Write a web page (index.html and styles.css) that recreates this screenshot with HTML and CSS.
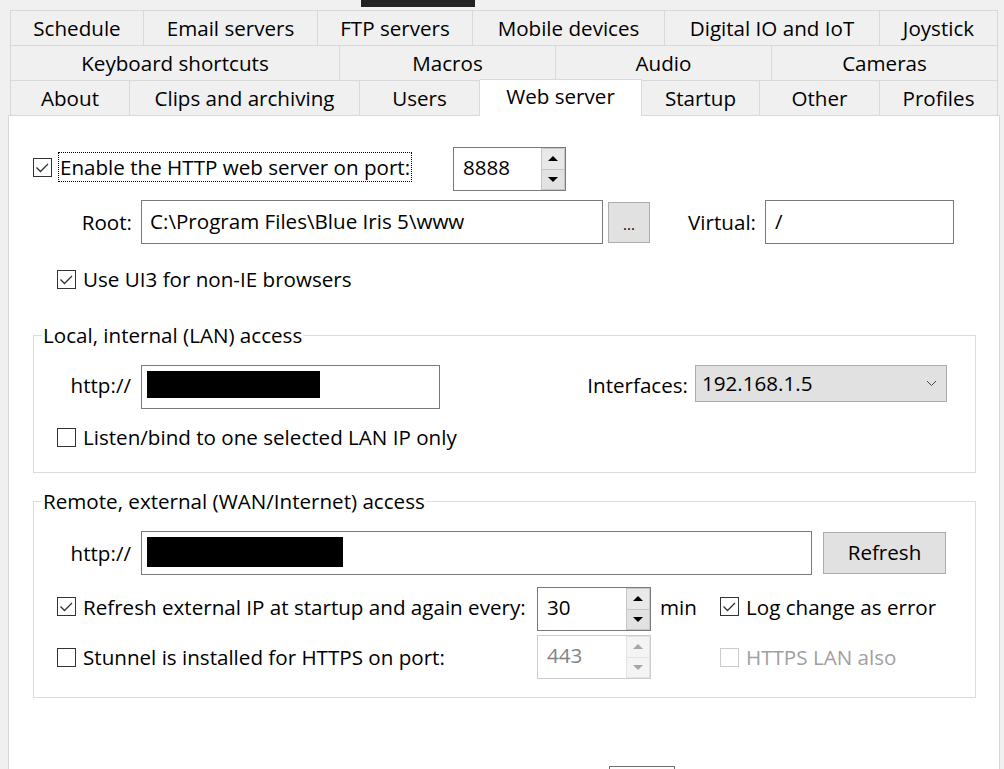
FILE: index.html
```html
<!DOCTYPE html>
<html>
<head>
<meta charset="utf-8">
<link rel="stylesheet" href="styles.css">
</head>
<body>
<div class="topbar"><div class="redact-top"></div></div>
<div class="tabs">
  <div class="tabrow first">
    <div class="tab" style="width:134px">Schedule</div>
    <div class="tab" style="width:174px">Email servers</div>
    <div class="tab" style="width:155px">FTP servers</div>
    <div class="tab" style="width:192px">Mobile devices</div>
    <div class="tab" style="width:215px">Digital IO and IoT</div>
    <div class="tab" style="width:118px">Joystick</div>
  </div>
  <div class="tabrow">
    <div class="tab" style="width:330px">Keyboard shortcuts</div>
    <div class="tab" style="width:216px">Macros</div>
    <div class="tab" style="width:216px">Audio</div>
    <div class="tab" style="width:226px">Cameras</div>
  </div>
  <div class="tabrow last">
    <div class="tab" style="width:120px">About</div>
    <div class="tab" style="width:230px">Clips and archiving</div>
    <div class="tab" style="width:120px">Users</div>
    <div class="tab sel" style="width:162px">Web server</div>
    <div class="tab" style="width:118px">Startup</div>
    <div class="tab" style="width:120px">Other</div>
    <div class="tab" style="width:118px">Profiles</div>
  </div>
</div>
<div class="panel">
  <div class="row r-enable">
    <div class="enable-left">
      <span class="cb"><svg viewBox="0 0 19 19" width="19" height="19"><path d="M3.5 9.5 L7.5 13.5 L15 6" fill="none" stroke="#333" stroke-width="1.3"/></svg></span>
      <span class="focus">Enable the HTTP web server on port:</span>
    </div>
    <div class="spin w113">
      <span class="spin-val">8888</span>
      <div class="spin-btns"><span class="sb"><i class="tri-up"></i></span><span class="sb"><i class="tri-down"></i></span></div>
    </div>
  </div>
  <div class="row r-root">
    <span class="lbl lbl-root">Root:</span>
    <div class="input w-root">C:\Program Files\Blue Iris 5\www</div>
    <div class="btn btn-dots">...</div>
    <span class="lbl lbl-virtual">Virtual:</span>
    <div class="input w-virtual">/</div>
  </div>
  <div class="row r-ui3">
    <span class="cb"><svg viewBox="0 0 19 19" width="19" height="19"><path d="M3.5 9.5 L7.5 13.5 L15 6" fill="none" stroke="#333" stroke-width="1.3"/></svg></span>
    <span class="cb-text">Use UI3 for non-IE browsers</span>
  </div>

  <fieldset class="group g-lan">
    <legend>Local, internal (LAN) access</legend>
    <div class="row g-http lan">
      <span class="lbl lbl-http">http://</span>
      <div class="input w-lan"><span class="redact r1"></span></div>
      <span class="lbl lbl-if">Interfaces:</span>
      <div class="select"><span>192.168.1.5</span><svg width="11" height="7" viewBox="0 0 11 7"><path d="M1 1 L5.5 5.5 L10 1" fill="none" stroke="#444" stroke-width="1"/></svg></div>
    </div>
    <div class="row r-check">
      <span class="cb"></span>
      <span class="cb-text">Listen/bind to one selected LAN IP only</span>
    </div>
  </fieldset>

  <fieldset class="group g-wan">
    <legend>Remote, external (WAN/Internet) access</legend>
    <div class="row g-http">
      <span class="lbl lbl-http">http://</span>
      <div class="input w-wan"><span class="redact r2"></span></div>
      <div class="btn btn-refresh">Refresh</div>
    </div>
    <div class="row r-opt r-refresh">
      <div class="opt-left raise">
        <span class="cb"><svg viewBox="0 0 19 19" width="19" height="19"><path d="M3.5 9.5 L7.5 13.5 L15 6" fill="none" stroke="#333" stroke-width="1.3"/></svg></span>
        <span class="cb-text">Refresh external IP at startup and again every:</span>
      </div>
      <div class="spin w114">
        <span class="spin-val">30</span>
        <div class="spin-btns"><span class="sb"><i class="tri-up"></i></span><span class="sb"><i class="tri-down"></i></span></div>
      </div>
      <span class="unit raise">min</span>
      <span class="cb raise"><svg viewBox="0 0 19 19" width="19" height="19"><path d="M3.5 9.5 L7.5 13.5 L15 6" fill="none" stroke="#333" stroke-width="1.3"/></svg></span>
      <span class="cb-text raise">Log change as error</span>
    </div>
    <div class="row r-opt r-stunnel">
      <div class="opt-left">
        <span class="cb"></span>
        <span class="cb-text">Stunnel is installed for HTTPS on port:</span>
      </div>
      <div class="spin w114 disabled">
        <span class="spin-val">443</span>
        <div class="spin-btns"><span class="sb"><i class="tri-up"></i></span><span class="sb"><i class="tri-down"></i></span></div>
      </div>
      <span class="unit"></span>
      <span class="cb disabled"></span>
      <span class="cb-text disabled-text">HTTPS LAN also</span>
    </div>
  </fieldset>

  <div class="bottom-btn"></div>
</div>
</body>
</html>
```

FILE: styles.css
```css
html, body {
  margin: 0;
  padding: 0;
  overflow: hidden;
  background: #f0f0f0;
  font-family: "Open Sans", "Noto Sans", sans-serif;
  font-size: 20.6px;
  color: #000;
}

.topbar {
  height: 10px;
}
.redact-top {
  margin-left: 361px;
  width: 114px;
  height: 7px;
  background: #222;
}

.tabs {
  margin-left: 10px;
  width: 988px;
}
.tabrow {
  display: flex;
  height: 35px;
}
.tabrow.first {
  height: 36px;
}
.tabrow.last {
  height: 34px;
}
.tab {
  box-sizing: border-box;
  border-right: 1px solid #d9d9d9;
  border-bottom: 1px solid #d9d9d9;
  background: #f0f0f0;
  display: flex;
  align-items: center;
  justify-content: center;
  line-height: 1;
  white-space: nowrap;
}
.tabrow.first .tab {
  border-top: 1px solid #d9d9d9;
}
.tabrow.last .tab {
  border-bottom: none;
}
.tab:first-child {
  border-left: 1px solid #d9d9d9;
}
.tab.sel {
  background: #fff;
  position: relative;
  z-index: 1;
  margin-top: -2px;
  height: 37px;
  border-top: 1px solid #d9d9d9;
  padding-bottom: 4px;
}

.panel {
  box-sizing: border-box;
  margin-left: 8px;
  width: 992px;
  height: 654px;
  overflow: hidden;
  background: #fff;
  border: 1px solid #d9d9d9;
  border-bottom: none;
}

.row {
  display: flex;
  align-items: center;
}

.cb {
  box-sizing: border-box;
  width: 19px;
  height: 19px;
  border: 1px solid #333;
  background: #fff;
  flex: none;
  display: inline-flex;
  overflow: hidden;
}
.cb svg {
  margin: -1px;
}
.cb.disabled {
  border-color: #cccccc;
}
.cb-text {
  margin-left: 7px;
  white-space: nowrap;
}
.disabled-text {
  color: #a0a0a0;
}
.raise {
  margin-bottom: 5px;
}

.r-enable {
  margin-top: 31px;
  height: 44px;
  padding-left: 24px;
}
.enable-left {
  width: 420px;
  display: flex;
  align-items: center;
  flex: none;
  margin-bottom: 4px;
}
.focus {
  margin-left: 6px;
  border: 1px dotted #000;
  padding: 0 1px;
  line-height: 28px;
  white-space: nowrap;
}

.spin {
  box-sizing: border-box;
  height: 44px;
  border: 1px solid #7a7a7a;
  background: #fff;
  display: flex;
  flex: none;
}
.w113 { width: 113px; }
.w114 { width: 114px; }
.spin-val {
  flex: 1;
  padding-left: 9px;
  display: flex;
  align-items: center;
  padding-bottom: 4px;
}
.spin-btns {
  width: 24px;
  display: flex;
  flex-direction: column;
}
.sb {
  box-sizing: border-box;
  flex: 1;
  border: 1px solid #c6c6c6;
  background: #e9e9e9;
  display: flex;
  align-items: center;
  justify-content: center;
}
.sb + .sb {
  border-top: none;
  background: #e2e2e2;
}
.tri-up {
  width: 0;
  height: 0;
  border-left: 5px solid transparent;
  border-right: 5px solid transparent;
  border-bottom: 5px solid #000;
}
.tri-down {
  width: 0;
  height: 0;
  border-left: 5px solid transparent;
  border-right: 5px solid transparent;
  border-top: 5px solid #000;
}
.spin.disabled {
  border-color: #cccccc;
}
.spin.disabled .spin-val {
  color: #838383;
}
.spin.disabled .sb {
  background: #f4f4f4;
  border-color: #e3e3e3;
}
.spin.disabled .tri-up {
  border-bottom-color: #a6a6a6;
}
.spin.disabled .tri-down {
  border-top-color: #a6a6a6;
}

.r-root {
  margin-top: 9px;
  height: 44px;
  padding-left: 24px;
}
.lbl {
  white-space: nowrap;
}
.lbl-root {
  width: 99px;
  text-align: right;
  margin-right: 9px;
  flex: none;
}
.input {
  box-sizing: border-box;
  height: 44px;
  border: 1px solid #7a7a7a;
  background: #fff;
  display: flex;
  align-items: center;
  padding-left: 8px;
  padding-bottom: 3px;
  white-space: nowrap;
  flex: none;
}
.w-root { width: 462px; }
.w-virtual { width: 189px; padding-left: 9px; }
.btn {
  box-sizing: border-box;
  background: #e1e1e1;
  border: 1px solid #adadad;
  display: flex;
  align-items: center;
  justify-content: center;
  flex: none;
}
.btn-dots {
  margin-left: 5px;
  width: 42px;
  height: 41px;
  font-size: 15px;
  padding-top: 4px;
}
.lbl-virtual {
  width: 115px;
  box-sizing: border-box;
  text-align: right;
  padding-right: 9px;
  flex: none;
}

.r-ui3 {
  margin-top: 22px;
  height: 26px;
  padding-left: 48px;
}

.group {
  border: 1px solid #dcdcdc;
  padding: 0;
  margin: 0 23px 0 24px;
  min-inline-size: 0;
}
.group legend {
  margin-left: 8px;
  padding: 0 1px;
  line-height: 28px;
}
.g-lan {
  margin-top: 29px;
  padding-bottom: 22px;
}
.g-wan {
  margin-top: 14px;
  padding-bottom: 18px;
}
.g-http {
  margin-top: 16px;
  height: 44px;
}
.g-http.lan {
  align-items: flex-start;
}
.lbl-http {
  width: 97px;
  text-align: right;
  margin-right: 10px;
  height: 40px;
  display: flex;
  align-items: center;
  justify-content: flex-end;
  flex: none;
}
.w-lan { width: 299px; }
.w-wan { width: 671px; }
.redact {
  display: block;
  background: #000;
  margin-left: -3px;
}
.r1 { width: 173px; height: 27px; margin-bottom: 2px; }
.r2 { width: 196px; height: 30px; margin-top: 1px; }
.lbl-if {
  flex: 1;
  height: 40px;
  display: flex;
  align-items: center;
  justify-content: flex-end;
  padding-right: 7px;
}
.select {
  box-sizing: border-box;
  width: 252px;
  height: 37px;
  margin-right: 28px;
  background: #e1e1e1;
  border: 1px solid #adadad;
  display: flex;
  align-items: center;
  justify-content: space-between;
  padding: 0 9px 2px 6px;
  flex: none;
}
.select svg {
  margin-top: 2px;
}
.btn-refresh {
  margin-left: 11px;
  width: 123px;
  height: 42px;
  padding-bottom: 2px;
}

.r-check {
  margin-top: 15px;
  height: 26px;
  padding-left: 23px;
}

.r-opt {
  height: 44px;
  padding-left: 23px;
}
.r-refresh {
  margin-top: 12px;
}
.r-stunnel {
  margin-top: 4px;
}
.opt-left {
  width: 480px;
  display: flex;
  align-items: center;
  flex: none;
}
.unit {
  width: 60px;
  margin-left: 9px;
  flex: none;
}

.bottom-btn {
  margin-top: 68px;
  margin-left: 600px;
  width: 66px;
  height: 30px;
  box-sizing: border-box;
  border: 1px solid #6e6e6e;
  background: #fdfdfd;
}
```
